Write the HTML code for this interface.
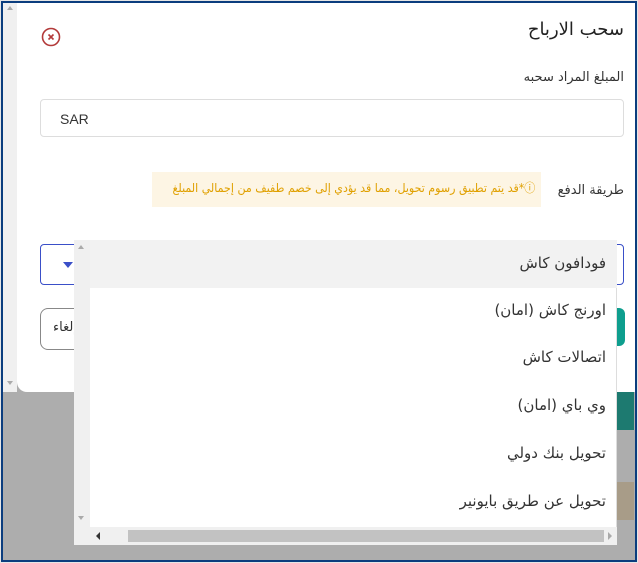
<!DOCTYPE html>
<html><head><meta charset="utf-8"><style>
*{margin:0;padding:0;box-sizing:border-box}
body{width:638px;height:563px;overflow:hidden;background:#e6e6e6;position:relative;font-family:"Liberation Sans","Noto Sans CJK SC",sans-serif}
.a{position:absolute}
.ar{font-family:"DejaVu Sans","Noto Sans CJK SC",sans-serif;direction:rtl;white-space:nowrap}
</style></head><body>
<div class="a" style="left:2px;top:2px;width:634px;height:558px;background:#adadad"></div>
<div class="a" style="left:3px;top:2px;width:14px;height:390px;background:#f0f0f0"></div>
<div class="a" style="left:7px;top:6px;width:0;height:0;border-left:3px solid transparent;border-right:3px solid transparent;border-bottom:4px solid #aaa"></div>
<div class="a" style="left:7px;top:381px;width:0;height:0;border-left:3px solid transparent;border-right:3px solid transparent;border-top:4px solid #aaa"></div>
<div class="a" style="left:17px;top:2px;width:619px;height:390px;background:#fff;border-bottom-left-radius:10px"></div>
<div class="a" style="left:617px;top:392px;width:17px;height:38px;background:#1d7a70"></div>
<div class="a" style="left:617px;top:482px;width:17px;height:38px;background:#a89c88"></div>
<div class="a" style="left:617px;top:308px;width:8px;height:38px;background:#0e9e8e;border-radius:0 6px 6px 0"></div>
<svg class="a" style="left:40px;top:26px" width="22" height="22" viewBox="0 0 22 22"><circle cx="11" cy="11" r="8.5" fill="none" stroke="#b33a3a" stroke-width="1.6"/><path d="M8.5 8.5L13.5 13.5M13.5 8.5L8.5 13.5" stroke="#b33a3a" stroke-width="1.6"/></svg>
<div class="a ar" style="right:14px;top:19px;font-size:18px;color:#222">سحب الارباح</div>
<div class="a ar" style="right:14px;top:70px;font-size:13px;color:#333">المبلغ المراد سحبه</div>
<div class="a" style="left:40px;top:99px;width:584px;height:38px;border:1px solid #ddd;border-radius:4px"></div>
<div class="a" style="left:60px;top:111px;font-size:14px;color:#333">SAR</div>
<div class="a ar" style="right:14px;top:183px;font-size:13px;color:#333">طريقة الدفع</div>
<div class="a" style="left:152px;top:172px;width:389px;height:35px;background:#fdf5e4"></div>
<div class="a ar" style="right:103px;top:179px;font-size:12px;color:#e0a000;transform:scaleX(0.92);transform-origin:right center">ⓘ*قد يتم تطبيق رسوم تحويل، مما قد يؤدي إلى خصم طفيف من إجمالي المبلغ</div>
<div class="a" style="left:40px;top:244px;width:584px;height:41px;border:1px solid #3a4fc8;border-radius:4px"></div>
<div class="a" style="left:63px;top:262px;width:0;height:0;border-left:5px solid transparent;border-right:5px solid transparent;border-top:6px solid #3a4fc8"></div>
<div class="a" style="left:40px;top:308px;width:60px;height:42px;border:1px solid #888;border-radius:8px"></div>
<div class="a ar" style="left:53px;top:320px;font-size:13px;color:#333">إلغاء</div>
<div class="a" style="left:74px;top:240px;width:543px;height:305px;background:#fff;border:1px solid #ddd"></div>
<div class="a" style="left:74px;top:240px;width:16px;height:288px;background:#f0f0f0"></div>
<div class="a" style="left:78px;top:245px;width:0;height:0;border-left:3px solid transparent;border-right:3px solid transparent;border-bottom:4px solid #aaa"></div>
<div class="a" style="left:78px;top:516px;width:0;height:0;border-left:3px solid transparent;border-right:3px solid transparent;border-top:4px solid #aaa"></div>
<div class="a" style="left:90px;top:240px;width:527px;height:48px;background:#f2f2f2"></div>
<div class="a" style="left:74px;top:527px;width:543px;height:18px;background:#f0f0f0"></div>
<div class="a" style="left:128px;top:530px;width:476px;height:12px;background:#c2c2c2"></div>
<div class="a" style="left:96px;top:532px;width:0;height:0;border-top:4px solid transparent;border-bottom:4px solid transparent;border-right:4px solid #333"></div>
<div class="a" style="left:608px;top:532px;width:0;height:0;border-top:4px solid transparent;border-bottom:4px solid transparent;border-left:4px solid #aaa"></div>
<div class="a ar" style="right:32px;top:254px;font-size:15px;color:#333">فودافون كاش</div>
<div class="a ar" style="right:32px;top:301px;font-size:15px;color:#333">اورنج كاش (امان)</div>
<div class="a ar" style="right:32px;top:348px;font-size:15px;color:#333">اتصالات كاش</div>
<div class="a ar" style="right:32px;top:396px;font-size:15px;color:#333">وي باي (امان)</div>
<div class="a ar" style="right:32px;top:444px;font-size:15px;color:#333">تحويل بنك دولي</div>
<div class="a ar" style="right:32px;top:492px;font-size:15px;color:#333">تحويل عن طريق بايونير</div>
<div class="a" style="left:1px;top:1px;width:636px;height:561px;border:2px solid #0b3d7e"></div>
</body></html>
